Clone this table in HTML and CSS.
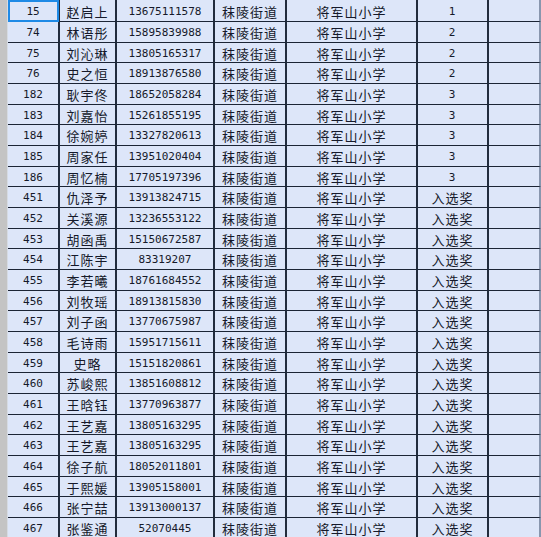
FILE: index.html
```html
<!DOCTYPE html>
<html lang="zh">
<head>
<meta charset="utf-8">
<link rel="stylesheet" href="styles.css">
</head>
<body>
<div class="sheet">
  <div class="gutter"></div>
  <div class="table">
    <div class="row first"><div class="c c1 num sel">15</div><div class="c c2">赵启上</div><div class="c c3 num">13675111578</div><div class="c c4">秣陵街道</div><div class="c c5">将军山小学</div><div class="c c6 num">1</div><div class="c c7"></div></div>
    <div class="row"><div class="c c1 num">74</div><div class="c c2">林语彤</div><div class="c c3 num">15895839988</div><div class="c c4">秣陵街道</div><div class="c c5">将军山小学</div><div class="c c6 num">2</div><div class="c c7"></div></div>
    <div class="row"><div class="c c1 num">75</div><div class="c c2">刘沁琳</div><div class="c c3 num">13805165317</div><div class="c c4">秣陵街道</div><div class="c c5">将军山小学</div><div class="c c6 num">2</div><div class="c c7"></div></div>
    <div class="row"><div class="c c1 num">76</div><div class="c c2">史之恒</div><div class="c c3 num">18913876580</div><div class="c c4">秣陵街道</div><div class="c c5">将军山小学</div><div class="c c6 num">2</div><div class="c c7"></div></div>
    <div class="row"><div class="c c1 num">182</div><div class="c c2">耿宇佟</div><div class="c c3 num">18652058284</div><div class="c c4">秣陵街道</div><div class="c c5">将军山小学</div><div class="c c6 num">3</div><div class="c c7"></div></div>
    <div class="row"><div class="c c1 num">183</div><div class="c c2">刘嘉怡</div><div class="c c3 num">15261855195</div><div class="c c4">秣陵街道</div><div class="c c5">将军山小学</div><div class="c c6 num">3</div><div class="c c7"></div></div>
    <div class="row"><div class="c c1 num">184</div><div class="c c2">徐婉婷</div><div class="c c3 num">13327820613</div><div class="c c4">秣陵街道</div><div class="c c5">将军山小学</div><div class="c c6 num">3</div><div class="c c7"></div></div>
    <div class="row"><div class="c c1 num">185</div><div class="c c2">周家任</div><div class="c c3 num">13951020404</div><div class="c c4">秣陵街道</div><div class="c c5">将军山小学</div><div class="c c6 num">3</div><div class="c c7"></div></div>
    <div class="row"><div class="c c1 num">186</div><div class="c c2">周忆楠</div><div class="c c3 num">17705197396</div><div class="c c4">秣陵街道</div><div class="c c5">将军山小学</div><div class="c c6 num">3</div><div class="c c7"></div></div>
    <div class="row"><div class="c c1 num">451</div><div class="c c2">仇泽予</div><div class="c c3 num">13913824715</div><div class="c c4">秣陵街道</div><div class="c c5">将军山小学</div><div class="c c6">入选奖</div><div class="c c7"></div></div>
    <div class="row"><div class="c c1 num">452</div><div class="c c2">关溪源</div><div class="c c3 num">13236553122</div><div class="c c4">秣陵街道</div><div class="c c5">将军山小学</div><div class="c c6">入选奖</div><div class="c c7"></div></div>
    <div class="row"><div class="c c1 num">453</div><div class="c c2">胡函禹</div><div class="c c3 num">15150672587</div><div class="c c4">秣陵街道</div><div class="c c5">将军山小学</div><div class="c c6">入选奖</div><div class="c c7"></div></div>
    <div class="row"><div class="c c1 num">454</div><div class="c c2">江陈宇</div><div class="c c3 num">83319207</div><div class="c c4">秣陵街道</div><div class="c c5">将军山小学</div><div class="c c6">入选奖</div><div class="c c7"></div></div>
    <div class="row"><div class="c c1 num">455</div><div class="c c2">李若曦</div><div class="c c3 num">18761684552</div><div class="c c4">秣陵街道</div><div class="c c5">将军山小学</div><div class="c c6">入选奖</div><div class="c c7"></div></div>
    <div class="row"><div class="c c1 num">456</div><div class="c c2">刘牧瑶</div><div class="c c3 num">18913815830</div><div class="c c4">秣陵街道</div><div class="c c5">将军山小学</div><div class="c c6">入选奖</div><div class="c c7"></div></div>
    <div class="row"><div class="c c1 num">457</div><div class="c c2">刘子函</div><div class="c c3 num">13770675987</div><div class="c c4">秣陵街道</div><div class="c c5">将军山小学</div><div class="c c6">入选奖</div><div class="c c7"></div></div>
    <div class="row"><div class="c c1 num">458</div><div class="c c2">毛诗雨</div><div class="c c3 num">15951715611</div><div class="c c4">秣陵街道</div><div class="c c5">将军山小学</div><div class="c c6">入选奖</div><div class="c c7"></div></div>
    <div class="row"><div class="c c1 num">459</div><div class="c c2">史略</div><div class="c c3 num">15151820861</div><div class="c c4">秣陵街道</div><div class="c c5">将军山小学</div><div class="c c6">入选奖</div><div class="c c7"></div></div>
    <div class="row"><div class="c c1 num">460</div><div class="c c2">苏峻熙</div><div class="c c3 num">13851608812</div><div class="c c4">秣陵街道</div><div class="c c5">将军山小学</div><div class="c c6">入选奖</div><div class="c c7"></div></div>
    <div class="row"><div class="c c1 num">461</div><div class="c c2">王晗钰</div><div class="c c3 num">13770963877</div><div class="c c4">秣陵街道</div><div class="c c5">将军山小学</div><div class="c c6">入选奖</div><div class="c c7"></div></div>
    <div class="row"><div class="c c1 num">462</div><div class="c c2">王艺嘉</div><div class="c c3 num">13805163295</div><div class="c c4">秣陵街道</div><div class="c c5">将军山小学</div><div class="c c6">入选奖</div><div class="c c7"></div></div>
    <div class="row"><div class="c c1 num">463</div><div class="c c2">王艺嘉</div><div class="c c3 num">13805163295</div><div class="c c4">秣陵街道</div><div class="c c5">将军山小学</div><div class="c c6">入选奖</div><div class="c c7"></div></div>
    <div class="row"><div class="c c1 num">464</div><div class="c c2">徐子航</div><div class="c c3 num">18052011801</div><div class="c c4">秣陵街道</div><div class="c c5">将军山小学</div><div class="c c6">入选奖</div><div class="c c7"></div></div>
    <div class="row"><div class="c c1 num">465</div><div class="c c2">于熙媛</div><div class="c c3 num">13905158001</div><div class="c c4">秣陵街道</div><div class="c c5">将军山小学</div><div class="c c6">入选奖</div><div class="c c7"></div></div>
    <div class="row"><div class="c c1 num">466</div><div class="c c2">张宁喆</div><div class="c c3 num">13913000137</div><div class="c c4">秣陵街道</div><div class="c c5">将军山小学</div><div class="c c6">入选奖</div><div class="c c7"></div></div>
    <div class="row"><div class="c c1 num">467</div><div class="c c2">张鉴通</div><div class="c c3 num">52070445</div><div class="c c4">秣陵街道</div><div class="c c5">将军山小学</div><div class="c c6">入选奖</div><div class="c c7"></div></div>
  </div>
</div>
</body>
</html>
```

FILE: styles.css
```css
html, body {
  margin: 0;
  padding: 0;
  background: #dde6f9;
  overflow: hidden;
}
.sheet {
  display: flex;
  width: 541px;
  height: 537px;
  overflow: hidden;
}
.gutter {
  flex: 0 0 8px;
  background: #c4c4c4;
  border-right: 1px solid #d6dbe3;
  box-sizing: border-box;
}
.table {
  display: flex;
  flex-direction: column;
  flex: 0 0 533px;
}
.row {
  display: flex;
  flex: 0 0 21px;
  height: 21px;
}
.row.first {
  flex-basis: 22px;
  height: 22px;
}
.row:nth-child(3n) {
  flex-basis: 20px;
  height: 20px;
}
.row:nth-child(2n) .c {
  box-shadow: 0 1px 0 #7d8aa1;
}
.c {
  box-sizing: border-box;
  height: 100%;
  background: #dde6f9;
  border-right: 2px solid #222c3d;
  border-bottom: 1px solid #1b2435;
  display: flex;
  align-items: center;
  justify-content: center;
  font-family: "Noto Sans CJK SC", "Noto Sans", sans-serif;
  font-size: 13px;
  color: #15192a;
  line-height: 1;
  padding-top: 1px;
  white-space: nowrap;
  position: relative;
}
.num {
  font-family: "DejaVu Sans Mono", "Liberation Mono", monospace;
  font-size: 11px;
  letter-spacing: 0;
}
.c1 { flex: 0 0 52px; }
.c2 { flex: 0 0 57px; }
.c3 { flex: 0 0 98px; }
.c4 { flex: 0 0 72px; }
.c5 { flex: 0 0 131px; }
.c6 { flex: 0 0 71px; }
.c7 { flex: 0 0 52px; border-right: 2px solid #8896ae; }
.c2, .c4, .c5, .c6 { letter-spacing: 1px; }
.sel::after {
  content: "";
  position: absolute;
  left: 0;
  top: 0;
  right: -1px;
  bottom: -1px;
  border: 2px solid #1e8ae6;
}
```
